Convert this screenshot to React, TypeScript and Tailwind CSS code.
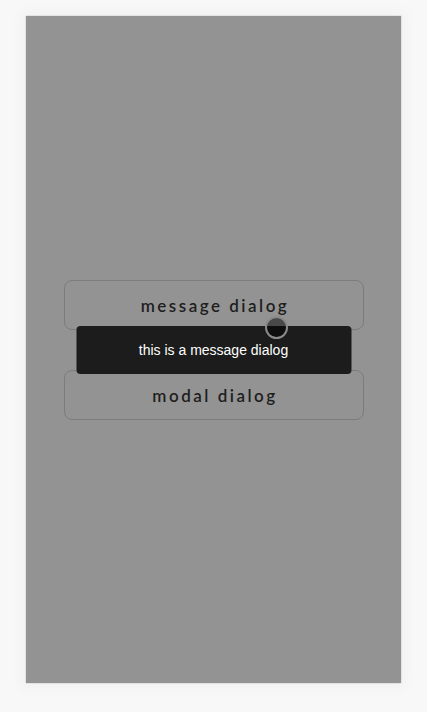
export default function App() {
  return (
    <div className="min-h-[712px] bg-[#f8f8f8] pt-[15px]">
      <div className="mx-auto w-[377px] rounded-[2px] border border-[#e2e2e2] shadow-[0_0_12px_6px_rgba(0,0,0,0.025)]">
        <div className="relative flex h-[667px] flex-col items-center justify-center gap-10 bg-[#939393]">
          {["message dialog", "modal dialog"].map((label) => (
            <button
              key={label}
              className="flex h-[50px] w-[300px] items-center justify-center rounded-lg border border-[#7c7c7c] pl-[3px] pt-[2px] font-['Lato',sans-serif] text-[17px] font-semibold tracking-[2.5px] text-[#1e1e1e]"
            >
              {label}
            </button>
          ))}
          <div className="absolute left-1/2 top-[310px] flex h-12 w-[275px] -translate-x-1/2 items-center justify-center rounded bg-[#1c1c1c] font-['Liberation_Sans',Arial,sans-serif] text-sm text-white">
            this is a message dialog
          </div>
          <div className="absolute left-[239px] top-[300px] h-[23px] w-[23px] rounded-full border-2 border-[#8a8a8a] bg-black/50" />
        </div>
      </div>
    </div>
  );
}
